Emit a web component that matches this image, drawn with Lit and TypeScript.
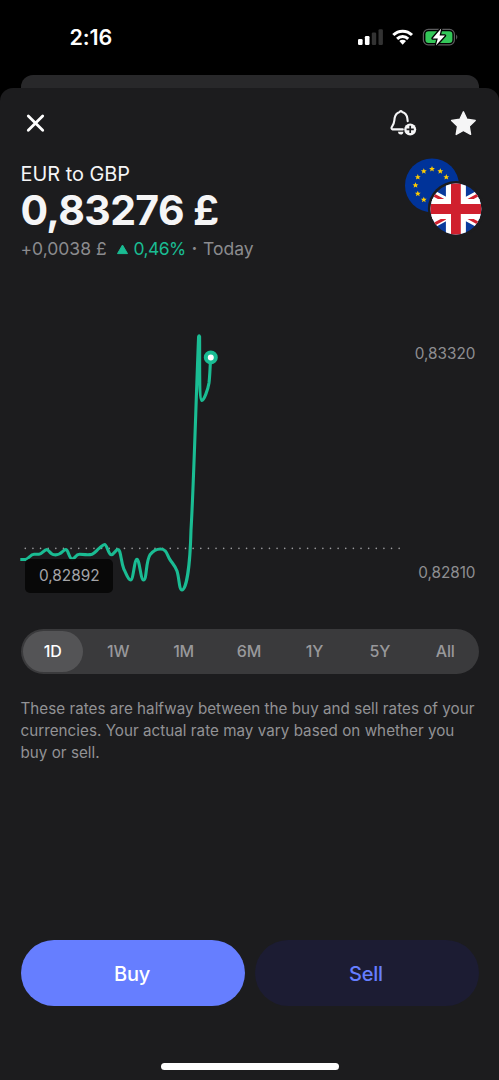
import { LitElement, html, svg, css } from "lit";
import { customElement, state } from "lit/decorators.js";

const STAR = "M0 -3 L0.85 -0.95 L2.9 -0.9 L1.3 0.45 L1.85 2.5 L0 1.3 L-1.85 2.5 L-1.3 0.45 L-2.9 -0.9 L-0.85 -0.95 Z";

@customElement("status-bar")
class StatusBar extends LitElement {
  static styles = css`
    :host { display: flex; height: 75px; box-sizing: border-box; padding: 24px 41px 0 69.5px; justify-content: space-between; }
    .time { font-size: 21.5px; font-weight: 600; line-height: 27px; letter-spacing: -0.1px; color: #fff; }
    svg { display: block; }
  `;
  render() {
    return html`
      <span class="time">2:16</span>
      <svg width="102" height="26" viewBox="356 24 102 26">
        <g fill="#fff">
          <rect x="358" y="39" width="4.6" height="6" rx="1.2" />
          <rect x="364.9" y="36" width="4.6" height="9" rx="1.2" />
          <rect x="371.8" y="32.6" width="4.4" height="12.4" rx="1.2" opacity=".2" />
          <rect x="378.5" y="29.2" width="4.4" height="15.8" rx="1.2" opacity=".2" />
        </g>
        <g fill="none" stroke="#fff" stroke-width="3">
          <path d="M393.3 35 A13.4 13.4 0 0 1 412 35" />
          <path d="M397.1 38.8 A8 8 0 0 1 408.2 38.8" />
        </g>
        <path d="M399.3 41.1 A4.8 4.8 0 0 1 406 41.1 L402.65 44.8 Z" fill="#fff" />
        <rect x="423.4" y="29.4" width="31" height="15.4" rx="4.8" fill="none" stroke="#5c5c5e" stroke-width="1.2" />
        <path d="M456.2 34.4 Q458.4 37 456.2 39.8 Z" fill="#6a6a6c" />
        <rect x="425.4" y="31.3" width="27" height="11.6" rx="3.2" fill="#34c759" />
        <path d="M441.2 28.4 L432.6 38.4 H437.8 L435.9 45.6 L445 35.6 H439.6 Z" fill="#fff" stroke="#000" stroke-width="2.6" stroke-linejoin="round" paint-order="stroke" />
      </svg>`;
  }
}

@customElement("currency-flags")
class CurrencyFlags extends LitElement {
  static styles = css`:host, svg { display: block; }`;
  render() {
    const stars = [[432, 169], [440.3, 171.2], [446.3, 177.1], [423.8, 171.2], [417.8, 177.1], [415.5, 185.3], [417.8, 193.7], [423.8, 199.7]];
    return html`<svg width="79" height="79" viewBox="404 157 79 79">
      <defs><clipPath id="disc"><circle cx="455.9" cy="209" r="25.4" /></clipPath></defs>
      <circle cx="432" cy="185.4" r="27" fill="#003399" />
      ${stars.map(([x, y]) => svg`<path d=${STAR} fill="#ffcc00" transform="translate(${x} ${y})" />`)}
      <circle cx="455.9" cy="209" r="28" fill="#1c1c1e" />
      <g clip-path="url(#disc)">
        <rect x="429" y="182" width="54" height="54" fill="#0a3a9c" />
        <path d="M420 189.5 L491.8 228.5 M420 228.5 L491.8 189.5" stroke="#fff" stroke-width="12" />
        <path d="M420 187.5 L455.9 207 M420 232 L455.9 212.5 M491.8 187.5 L455.9 207 M491.8 230.5 L455.9 211" stroke="#d0202e" stroke-width="3" />
        <path d="M455.9 180 V238 M427 209 H485" stroke="#fff" stroke-width="20" />
        <path d="M455.9 180 V238 M427 209 H485" stroke="#d0202e" stroke-width="9.8" />
      </g>
    </svg>`;
  }
}

@customElement("rate-chart")
class RateChart extends LitElement {
  static styles = css`
    :host { display: block; position: relative; height: 335px; }
    .plot { display: block; }
    .scale { position: absolute; right: 23.6px; font-size: 15.3px; line-height: 20px; color: #8e8e91; }
    .high { top: 73.5px; }
    .low { top: 293px; letter-spacing: -0.05px; }
    .open { position: absolute; left: 25.3px; top: 288.6px; width: 88px; height: 34.4px; border-radius: 5px; background: rgba(5, 5, 5, 0.85); color: #a5a5a8; font-size: 15.4px; line-height: 34.4px; text-align: center; }
  `;
  render() {
    return html`
      <svg class="plot" width="499" height="335" viewBox="0 270 499 335" fill="none">
        <path d="M25.3 548.4 H400" stroke="#9a9a9d" stroke-width="1.6" stroke-linecap="round" stroke-dasharray="0 7.63" />
        <path d="M20.3 559.5 H25.5 C28.5 559 30.5 554.3 34 554.2 H39 C42 554 44 549.6 46.7 549.6 C49 549.6 50 554.8 54.5 554.8 C62 555.5 62.5 549.6 65.8 549.6 C68.5 549.6 69 559 72.3 559 C75 559 75.5 554.3 79.5 554.3 C86 554.3 88 555.4 92 554.2 C95 553 96.5 550.5 99 548.4 C101 547 103 544.5 104.6 544.5 C107 544.5 108.5 554.8 111.3 554.8 C114 554.8 115.5 549.6 117.8 549.6 C121 549.6 120.5 560 123.8 569 C126.5 574 128 580 130.6 580 C133.6 580 134.2 559.2 137 559.2 C139.5 559.2 140.7 580 143.5 580 C147 580 145.5 562 150 554.8 C153 551 156 549 160.5 549 C167 549 167 555.5 170.2 560 C173 564 175.5 566.5 177 571 C179.5 579 179 590 182 590 C186 590 190 568 191 530 C193.5 490 196 400 198.6 336.6 Q199.1 335 199.6 336.6 C199.8 360 199 400 201.8 400.4 C204 401 208 389 209 383 C210 375 210 365 210.8 358" stroke="#1abc93" stroke-width="3.1" stroke-linecap="butt" stroke-linejoin="round" />
        <circle cx="210.8" cy="357.4" r="5" fill="#fff" stroke="#1abc93" stroke-width="4" />
      </svg>
      <span class="scale high">0,83320</span>
      <span class="scale low">0,82810</span>
      <div class="open">0,82892</div>`;
  }
}

@customElement("app-root")
class AppRoot extends LitElement {
  @state() private range = "1D";

  static styles = css`
    :host { display: flex; flex-direction: column; height: 1080px; overflow: hidden; background: #000; font-family: Inter, sans-serif; color: #f5f5f6; font-feature-settings: "calt" 0; }
    svg { display: block; }
    .behind { height: 12.5px; margin: 0 20.5px; background: #28282a; border-radius: 12px 12px 0 0; flex: none; }
    .sheet { flex: 1; display: flex; flex-direction: column; background: #1c1c1e; border-radius: 13px 13px 0 0; }
    .head { display: flex; justify-content: space-between; align-items: flex-start; padding: 21.5px 22px 0 25px; height: 70.5px; box-sizing: border-box; }
    .actions { display: flex; gap: 32px; }
    .quote { display: flex; justify-content: space-between; height: 113px; padding: 0 16px 0 20.5px; margin-top: -1px; }
    .pair { font-size: 19.9px; line-height: 26px; margin-top: 4px; }
    .price { font-size: 41px; font-weight: 700; line-height: 46px; letter-spacing: -0.62px; margin-top: 0; }
    .change { display: flex; font-size: 17.5px; line-height: 24px; margin-top: 4px; color: #8b8b8e; white-space: pre; }
    .up { color: #1abc93; letter-spacing: -0.6px; margin-right: 1px; }
    .dot { margin: 0 0.8px 0 0; font-weight: 700; }
    .tri { margin: 7px 6px 0 10px; }
    .ranges { display: flex; gap: 5px; height: 45px; box-sizing: border-box; margin: 24px 20.5px 0 20.5px; padding: 2px 3px 2px 2px; border-radius: 23px; background: #3a3a3c; }
    .range { flex: 1; border: 0; padding: 0; background: none; font: 500 16px/41px Inter, sans-serif; color: #98989b; border-radius: 21px; letter-spacing: -0.2px; }
    .selected { background: #545456; color: #fff; }
    .note { margin: 23.5px 20px 0 20.5px; font-size: 15.2px; letter-spacing: 0.03px; line-height: 22.2px; color: #929295; }
    .line { display: block; white-space: nowrap; }
    .buttons { display: flex; gap: 10px; margin: auto 20.5px 57px 20.5px; }
    .button { flex: 1; height: 66px; border: 0; border-radius: 33px; font: 450 20px/64px Inter, sans-serif; letter-spacing: -0.2px; padding: 1.5px 1px 0 0; }
    .buy { background: #667eff; color: #fff; }
    .sell { background: #1c1c33; color: #667eff; }
    .home { width: 178px; height: 7px; border-radius: 4px; background: #fff; margin: 0 0 10px 161px; flex: none; }
  `;

  render() {
    return html`
      <status-bar></status-bar>
      <div class="behind"></div>
      <main class="sheet">
        <header class="head">
          <svg width="22" height="28" viewBox="25 109 22 28" fill="none" stroke="#fff" stroke-width="2.8" stroke-linecap="round"><path d="M28.3 116 L42.7 130.2 M42.7 116 L28.3 130.2" /></svg>
          <div class="actions">
            <svg width="28" height="28" viewBox="389.5 109 28 28" fill="none">
              <path d="M403.3 129.4 H393.2 Q391.3 128.8 392.4 126.8 C395.2 123.2 394.6 121 395.2 117.8 C395.9 114.4 398 112.5 400.2 111.9 Q401.4 110.4 402.6 111.9 C405.4 112.7 407.4 114.8 407.8 118.2 L408.2 121.2" stroke="#f5f5f6" stroke-width="2.1" stroke-linecap="round" stroke-linejoin="round" />
              <path d="M398.4 131.8 H403.8 Q404 134.6 401.2 134.6 Q398.6 134.4 398.4 131.8 Z" fill="#f5f5f6" />
              <circle cx="410.7" cy="129.4" r="6" fill="#f5f5f6" />
              <path d="M410.7 125.8 V133 M407.1 129.4 H414.3" stroke="#1c1c1e" stroke-width="1.7" />
            </svg>
            <svg width="28" height="28" viewBox="449 109 28 28"><path d="M463.4 111.8 L466.9 119.3 L475.2 120.4 L469.2 126.2 L470.6 134.4 L463.4 130.5 L456.2 134.4 L457.6 126.2 L451.6 120.4 L459.9 119.3 Z" fill="#f5f5f6" stroke="#f5f5f6" stroke-width="1.4" stroke-linejoin="round" /></svg>
          </div>
        </header>
        <section class="quote">
          <div>
            <div class="pair">EUR to GBP</div>
            <div class="price">0,83276 £</div>
            <div class="change"><span>+0,0038 £</span><svg class="tri" width="11" height="11" viewBox="0 0 11 11"><path d="M5.5 1 L10.5 9.6 H0.5 Z" fill="#1abc93" stroke="#1abc93" stroke-linejoin="round" /></svg><span class="up">0,46%</span><span> <span class="dot">·</span> Today</span></div>
          </div>
          <currency-flags></currency-flags>
        </section>
        <rate-chart></rate-chart>
        <nav class="ranges">
          ${["1D", "1W", "1M", "6M", "1Y", "5Y", "All"].map(
            (r) => html`<button class="range ${r === this.range ? "selected" : ""}" @click=${() => (this.range = r)}>${r}</button>`
          )}
        </nav>
        <p class="note">
          <span class="line">These rates are halfway between the buy and sell rates of your</span>
          <span class="line">currencies. Your actual rate may vary based on whether you</span>
          <span class="line">buy or sell.</span>
        </p>
        <div class="buttons">
          <button class="button buy">Buy</button>
          <button class="button sell">Sell</button>
        </div>
        <div class="home"></div>
      </main>`;
  }
}
